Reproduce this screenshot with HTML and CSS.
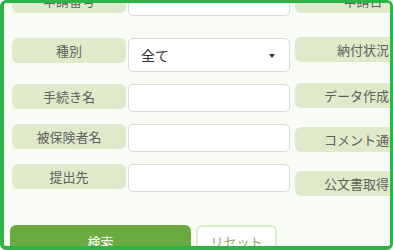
FILE: index.html
```html
<!DOCTYPE html>
<html lang="ja">
<head>
<meta charset="utf-8">
<title>検索</title>
<link rel="stylesheet" href="styles.css">
</head>
<body>
<div class="frame">
  <div class="form">
    <div class="col col-left">
      <div class="row row-first"><div class="label">申請番号</div><div class="input"></div></div>
      <div class="row"><div class="label">種別</div><div class="input select">全て<span class="caret"></span></div></div>
      <div class="row"><div class="label">手続き名</div><div class="input"></div></div>
      <div class="row"><div class="label">被保険者名</div><div class="input"></div></div>
      <div class="row"><div class="label">提出先</div><div class="input"></div></div>
    </div>
    <div class="col col-right">
      <div class="rrow rrow-first"><div class="label rlabel">申請日</div></div>
      <div class="rrow rrow-select"><div class="label rlabel">納付状況</div></div>
      <div class="rrow"><div class="label rlabel">データ作成日</div></div>
      <div class="rrow"><div class="label rlabel">コメント通知</div></div>
      <div class="rrow"><div class="label rlabel">公文書取得日</div></div>
    </div>
  </div>
  <div class="buttons">
    <div class="btn btn-search">検索</div>
    <div class="btn btn-reset">リセット</div>
  </div>
</div>
</body>
</html>
```
FILE: styles.css
```css
html, body {
  margin: 0;
  padding: 0;
}
body {
  font-family: "Noto Sans CJK JP", "Noto Sans", sans-serif;
  color: #5e5e5e;
}
.frame {
  width: 393px;
  height: 250px;
  box-sizing: border-box;
  border: 3px solid #2db446;
  border-left-width: 4px;
  border-bottom-width: 4px;
  border-radius: 6px;
  background: #f9fcf4;
  overflow: hidden;
}
.form {
  display: flex;
  gap: 5px;
  margin-top: -15px;
  padding-left: 8px;
}
.col {
  display: flex;
  flex-direction: column;
  gap: 12px;
  flex-shrink: 0;
}
.col-left {
  width: 278px;
}
.col-right {
  width: 136px;
}
.row {
  display: flex;
  align-items: flex-start;
  gap: 2px;
}
.row-first {
  margin-bottom: 10px;
}
.label {
  width: 114px;
  height: 25px;
  flex-shrink: 0;
  border-radius: 6px;
  background: #dfeacb;
  display: flex;
  align-items: center;
  justify-content: center;
  font-size: 13px;
  color: #606060;
  white-space: nowrap;
}
.rlabel {
  width: 136px;
}
.input {
  width: 162px;
  height: 28px;
  box-sizing: border-box;
  border: 1px solid #d9d9d9;
  border-radius: 5px;
  background: #ffffff;
  flex-shrink: 0;
}
.select {
  height: 34px;
  position: relative;
  display: flex;
  align-items: center;
  padding-left: 12px;
  font-size: 14px;
  color: #333333;
}
.caret {
  position: absolute;
  right: 14px;
  top: 15px;
  width: 0;
  height: 0;
  border-left: 3px solid transparent;
  border-right: 3px solid transparent;
  border-top: 4px solid #333333;
}
.rrow {
  height: 32px;
}
.rrow-first {
  height: 37px;
}
.rrow-select {
  height: 34px;
}
.buttons {
  display: flex;
  gap: 5px;
  margin-top: 22px;
  padding-left: 6px;
}
.btn {
  height: 32px;
  box-sizing: border-box;
  border-radius: 6px;
  display: flex;
  align-items: center;
  justify-content: center;
  font-size: 13px;
}
.btn-search {
  width: 181px;
  background: #69ab3f;
  color: #ffffff;
}
.btn-reset {
  width: 81px;
  background: #ffffff;
  border: 2px solid #dcecc6;
  color: #8cad6a;
}
```
